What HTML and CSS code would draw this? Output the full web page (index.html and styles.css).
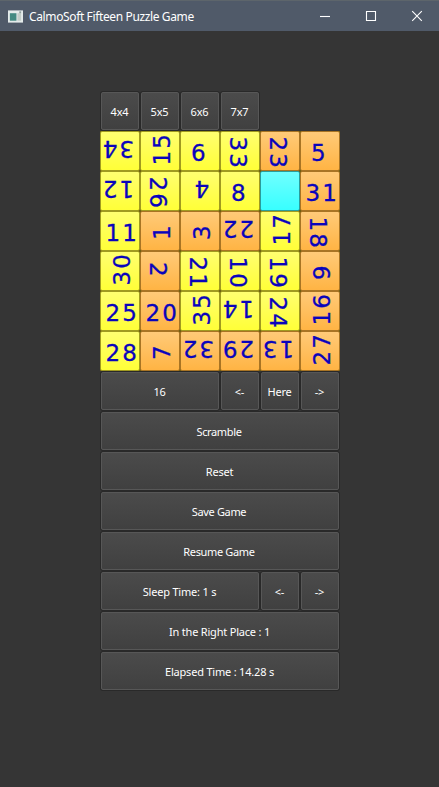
FILE: index.html
```
<!DOCTYPE html>
<html lang="en">
<head>
<meta charset="utf-8">
<title>CalmoSoft Fifteen Puzzle Game</title>
<link rel="stylesheet" href="styles.css">
</head>
<body>
<header class="titlebar">
  <svg class="app-icon" width="15" height="13" viewBox="0 0 16 13"><rect width="16" height="13" fill="#e4ebeb"/><rect x="2" y="3" width="7" height="8" fill="#438a82"/><rect x="10" y="3" width="4" height="8" fill="#c3cdc9"/><rect x="12" y="1" width="2" height="2" fill="#8fa09d"/></svg>
  <h1 class="title">CalmoSoft Fifteen Puzzle Game</h1>
  <div class="controls">
    <svg width="12" height="12" viewBox="0 0 12 12"><path d="M1 6.5H11"/></svg>
    <svg width="12" height="12" viewBox="0 0 12 12"><path d="M1.5 1.5H10.5V10.5H1.5Z"/></svg>
    <svg width="12" height="12" viewBox="0 0 12 12"><path d="M1.2 1.2L10.8 10.8M10.8 1.2L1.2 10.8"/></svg>
  </div>
</header>
<main class="game">
  <button class="btn">4x4</button><button class="btn">5x5</button><button class="btn">6x6</button><button class="btn">7x7</button>
  <div class="board">
    <div class="tile yellow r180"><span>34</span></div><div class="tile yellow r270"><span>15</span></div><div class="tile yellow single"><span>6</span></div><div class="tile yellow r90"><span>33</span></div><div class="tile orange r90"><span>23</span></div><div class="tile orange single"><span>5</span></div>
    <div class="tile yellow r180"><span>12</span></div><div class="tile yellow r90"><span>26</span></div><div class="tile yellow single r180"><span>4</span></div><div class="tile yellow single"><span>8</span></div><div class="tile empty"></div><div class="tile orange"><span>31</span></div>
    <div class="tile yellow"><span>11</span></div><div class="tile orange single r270"><span>1</span></div><div class="tile orange single r270"><span>3</span></div><div class="tile orange r180"><span>22</span></div><div class="tile yellow r270"><span>17</span></div><div class="tile orange r90"><span>18</span></div>
    <div class="tile yellow r270"><span>30</span></div><div class="tile orange single r90"><span>2</span></div><div class="tile yellow r90"><span>21</span></div><div class="tile yellow r90"><span>10</span></div><div class="tile yellow r90"><span>19</span></div><div class="tile orange single r270"><span>9</span></div>
    <div class="tile yellow"><span>25</span></div><div class="tile orange"><span>20</span></div><div class="tile yellow r270"><span>35</span></div><div class="tile yellow r180"><span>14</span></div><div class="tile yellow r90"><span>24</span></div><div class="tile orange r270"><span>16</span></div>
    <div class="tile yellow"><span>28</span></div><div class="tile orange single r270"><span>7</span></div><div class="tile orange r180"><span>32</span></div><div class="tile orange r180"><span>29</span></div><div class="tile orange r180"><span>13</span></div><div class="tile orange r270"><span>27</span></div>
  </div>
  <button class="btn span3">16</button><button class="btn">&lt;-</button><button class="btn">Here</button><button class="btn">-&gt;</button>
  <button class="btn full tight">Scramble</button>
  <button class="btn full">Reset</button>
  <button class="btn full tight">Save Game</button>
  <button class="btn full tight">Resume Game</button>
  <button class="btn span4">Sleep Time: 1 s</button><button class="btn">&lt;-</button><button class="btn">-&gt;</button>
  <button class="btn full">In the Right Place : 1</button>
  <button class="btn full">Elapsed Time : 14.28 s</button>
</main>
</body>
</html>
```
FILE: styles.css
```
* { box-sizing: border-box; }
body {
  margin: 0;
  height: 787px;
  overflow: hidden;
  background: #353535;
  font-family: "Noto Sans", sans-serif;
}
.titlebar {
  display: flex;
  align-items: center;
  height: 31px;
  padding: 0 16px 0 8px;
  background: #505a69;
  border-top: 1px solid #5d656b;
  color: #fff;
}
.title {
  flex: 1;
  margin: 0 0 0 6px;
  font-size: 12px;
  font-weight: 400;
  letter-spacing: -0.37px;
  white-space: nowrap;
}
.controls { display: flex; gap: 34px; }
.controls svg { display: block; fill: none; stroke: #fff; stroke-width: 1.1; }
.game {
  display: grid;
  grid-template-columns: repeat(6, 40px);
  grid-auto-rows: 40px;
  width: 240px;
  margin: 60px 0 0 100px;
}
.btn {
  margin: 1px;
  padding: 0 1px 0 0;
  border: 1px solid #575757;
  border-radius: 2px;
  background: linear-gradient(#4b4b4b, #404040);
  box-shadow: 0 0 0 1px #292929;
  color: #fff;
  font: 11px "Noto Sans", sans-serif;
  letter-spacing: -0.2px;
  white-space: nowrap;
}
.tight { padding-right: 2px; letter-spacing: -0.35px; }
.span3 { grid-column: span 3; }
.span4 { grid-column: span 4; }
.full { grid-column: 1 / -1; }
.board {
  grid-column: 1 / -1;
  grid-row: 2 / span 6;
  display: grid;
  grid-template-columns: repeat(6, 40px);
  grid-template-rows: repeat(6, 40px);
  background: #6b5c10;
}
.tile {
  --shift: 2.2px;
  --turn: 0deg;
  display: flex;
  align-items: center;
  justify-content: center;
  border: 1px solid;
  border-radius: 2px;
  color: #0a04bc;
  font: 23px/38px "DejaVu Sans", sans-serif;
  letter-spacing: 2px;
  -webkit-text-stroke: 0.3px #0a04bc;
}
.single { --shift: -0.7px; }
.tile span { display: block; transform: rotate(var(--turn)) translate(var(--shift), 2px); }
.r90 { --turn: 90deg; }
.r180 { --turn: 180deg; }
.r270 { --turn: 270deg; }
.yellow { background: linear-gradient(#ffff70, #ffff38); border-color: #a09a20; }
.orange { background: linear-gradient(#ffca78, #ffb444); border-color: #a87424; }
.empty { background: linear-gradient(#70ffff, #38ffff); border-color: #2a9c9c; }
```
